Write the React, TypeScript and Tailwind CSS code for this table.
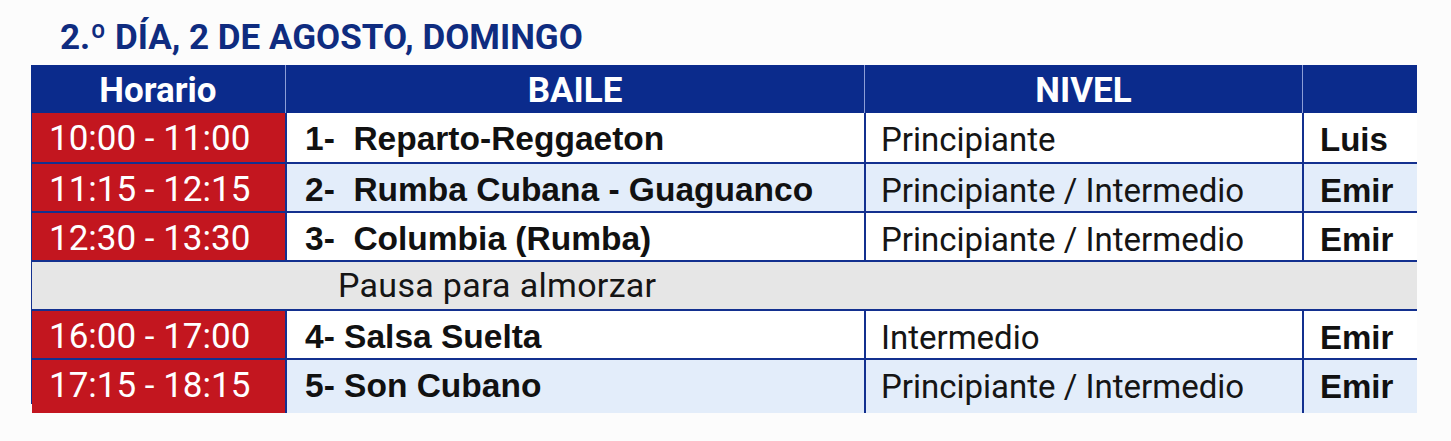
const rows = [
  { time: '10:00 - 11:00', baile: '1-  Reparto-Reggaeton', nivel: 'Principiante', who: 'Luis', tint: false },
  { time: '11:15 - 12:15', baile: '2-  Rumba Cubana - Guaguanco', nivel: 'Principiante / Intermedio', who: 'Emir', tint: true },
  { time: '12:30 - 13:30', baile: '3-  Columbia (Rumba)', nivel: 'Principiante / Intermedio', who: 'Emir', tint: false },
  { pause: 'Pausa para almorzar' },
  { time: '16:00 - 17:00', baile: '4- Salsa Suelta', nivel: 'Intermedio', who: 'Emir', tint: false },
  { time: '17:15 - 18:15', baile: '5- Son Cubano', nivel: 'Principiante / Intermedio', who: 'Emir', tint: true },
];

function ScheduleRow({ row, first, last }: { row: (typeof rows)[number]; first: boolean; last: boolean }) {
  const h = last ? 'h-[46px]' : first ? 'h-[49px]' : 'h-[49px]';
  const top = first ? 'border-t-0' : 'border-t-2';
  if ('pause' in row) {
    return (
      <div className={`${h} ${top} flex items-center border-[#13308f] bg-[#e6e6e6] pl-[306px] font-['Roboto',sans-serif] text-[34px] tracking-[0.3px] text-[#151515]`}>
        {row.pause}
      </div>
    );
  }
  const cell = row.tint ? 'bg-[#e3edfa]' : 'bg-white';
  return (
    <div className={`grid grid-cols-[253px_579px_438px_115px] border-[#13308f] ${top} ${h}`}>
      <div className="flex items-center bg-[#c3161f] pl-[17px] font-['Roboto',sans-serif] text-[35px] text-white">
        {row.time}
      </div>
      <div className={`flex items-center border-l-2 border-[#13308f] pl-[18px] whitespace-pre font-['Liberation_Sans',Arial,sans-serif] text-[33.5px] font-bold text-[#111] ${cell}`}>
        {row.baile}
      </div>
      <div className={`flex items-center border-l-2 border-[#13308f] pl-[15px] font-['Roboto',sans-serif] text-[33px] text-[#151515] ${cell}`}>
        {row.nivel}
      </div>
      <div className={`flex items-center border-l-2 border-[#13308f] pl-[16px] font-['Liberation_Sans',Arial,sans-serif] text-[33px] font-bold text-[#111] ${cell}`}>
        {row.who}
      </div>
    </div>
  );
}

export default function App() {
  return (
    <div className="h-[441px] w-[1451px] overflow-hidden bg-[#fcfcfc]">
      <div className="ml-[60px] mt-[20px] h-[35px] font-['Roboto',sans-serif] text-[35px] font-bold leading-none text-[#0f2c80]">
        2.º DÍA, 2 DE AGOSTO, DOMINGO
      </div>

      <div className="ml-[31px] mt-[10px] w-[1386px]">
        <div className="grid h-[48px] grid-cols-[254px_579px_438px_115px] bg-[#0b2b8c] font-['Roboto',sans-serif] text-[35px] font-bold text-white">
          <div className="flex items-center justify-center">Horario</div>
          <div className="flex items-center justify-center border-l border-[#8c9dd6]">BAILE</div>
          <div className="flex items-center justify-center border-l border-[#8c9dd6]">NIVEL</div>
          <div className="border-l border-[#8c9dd6]" />
        </div>

        <div className="flex flex-col border-l border-[#13308f]">
          {rows.map((r, i) => (
            <ScheduleRow key={i} row={r} first={i === 0} last={i === rows.length - 1} />
          ))}
        </div>
      </div>
    </div>
  );
}
